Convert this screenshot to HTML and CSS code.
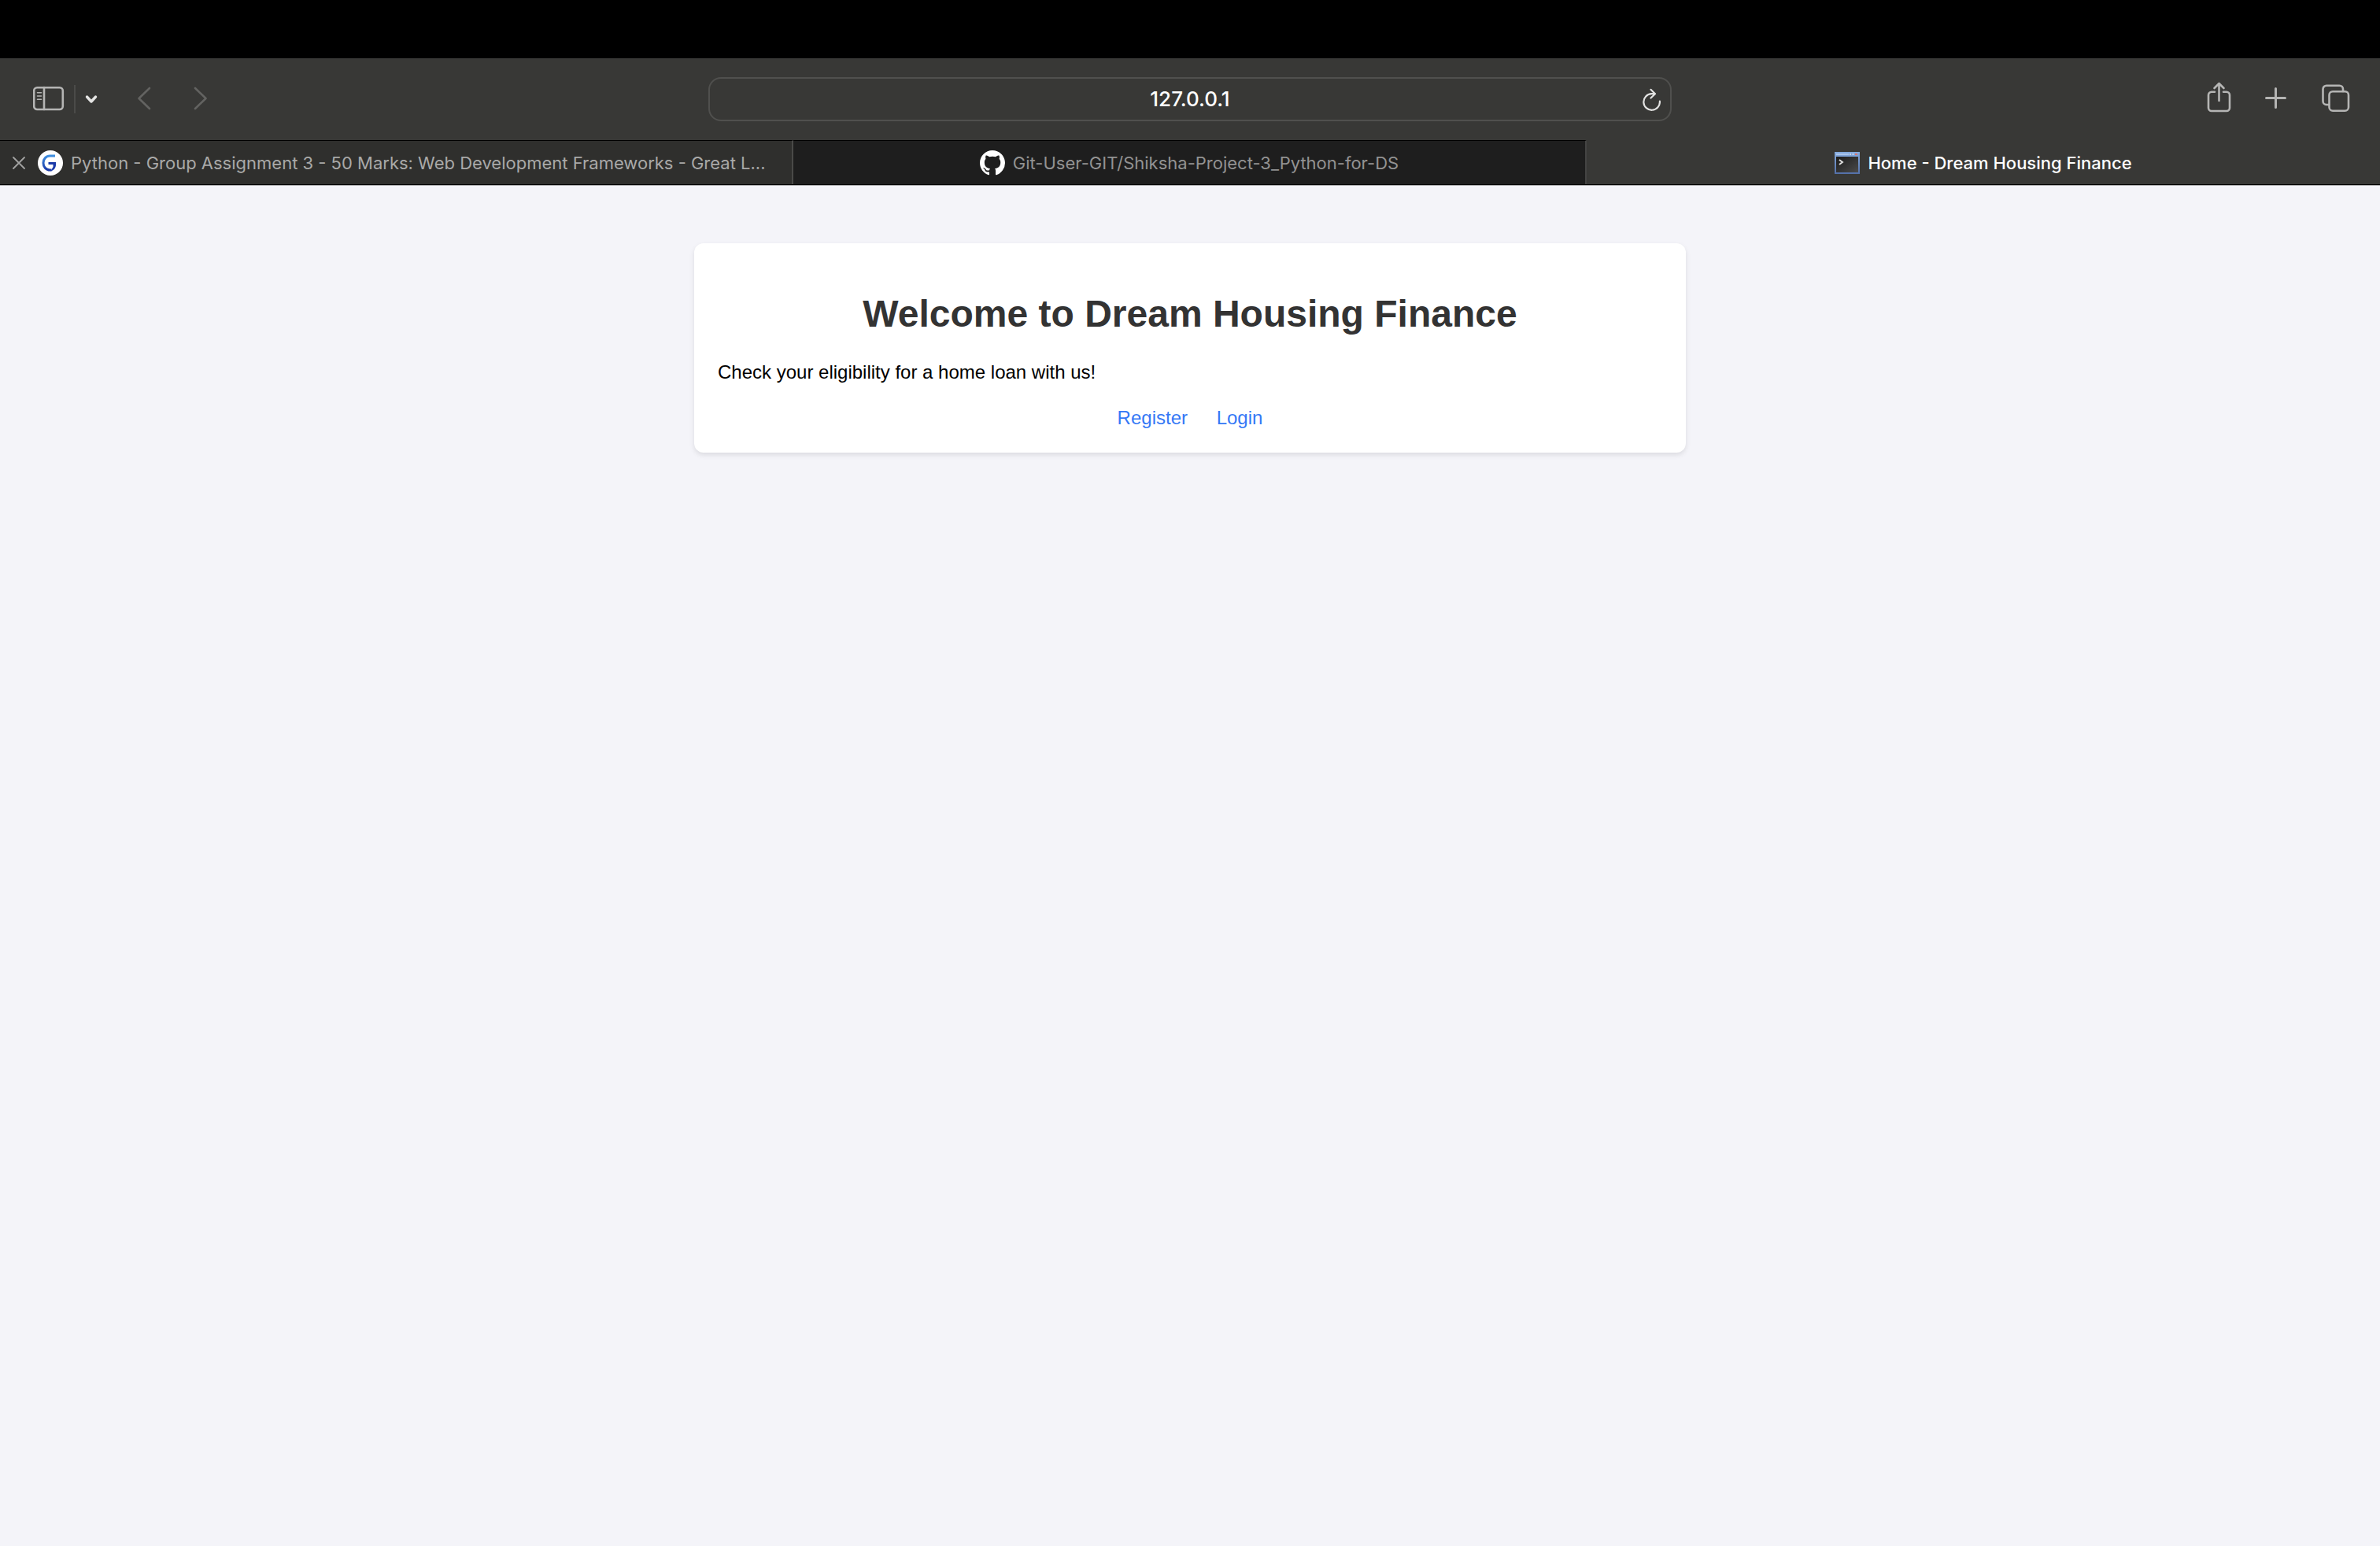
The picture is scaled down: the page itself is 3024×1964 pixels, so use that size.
FILE: index.html
```html
<!DOCTYPE html>
<html lang="en">
<head>
<meta charset="utf-8">
<title>Home - Dream Housing Finance</title>
<link rel="stylesheet" href="styles.css">
</head>
<body>
<header class="browser">
  <div class="toolbar">
    <div class="tools tools-start">
      <button class="tool" aria-label="Show sidebar">
        <svg width="40" height="48" viewBox="0 0 40 48"><rect x="1.2" y="9.2" width="36.6" height="27.8" rx="4"/><path d="M14 9v28"/><path class="fine" d="M5.5 15.7h5M5.5 20h5M5.5 24.3h5"/></svg>
      </button>
      <span class="divider"></span>
      <button class="tool tool-bright" aria-label="Tab groups">
        <svg width="16" height="48" viewBox="0 0 16 48"><path d="M2.5 21l5.5 6 5.5-6"/></svg>
      </button>
      <button class="tool tool-dim tool-back" aria-label="Back">
        <svg width="18" height="48" viewBox="0 0 18 48"><path d="M16 10L2.5 23 16 36"/></svg>
      </button>
      <button class="tool tool-dim tool-forward" aria-label="Forward">
        <svg width="18" height="48" viewBox="0 0 18 48"><path d="M2 10l13.5 13L2 36"/></svg>
      </button>
    </div>
    <div class="address">
      <input class="address-input" type="text" value="127.0.0.1" aria-label="Address">
      <button class="tool reload" aria-label="Reload">
        <svg width="24" height="32" viewBox="0 0 24 32"><path d="M17 9.2H12.5A10.3 10.3 0 1 0 22.9 18.5M11.5 3.8L17 9.2l-5.5 5.3"/></svg>
      </button>
    </div>
    <div class="tools tools-end">
      <button class="tool" aria-label="Share">
        <svg width="31" height="48" viewBox="0 0 31 48"><path d="M10 14.700H6a4 4 0 0 0-4 4V35a4 4 0 0 0 4 4h19a4 4 0 0 0 4-4V18.700a4 4 0 0 0-4-4H21M15.500 26V5M9.500 10l6-6 6 6"/></svg>
      </button>
      <button class="tool" aria-label="New tab">
        <svg width="30" height="48" viewBox="0 0 30 48"><path class="plus" d="M14.500 10.500v24M2.500 22.500h24"/></svg>
      </button>
      <button class="tool" aria-label="Tab overview">
        <svg width="37" height="48" viewBox="0 0 37 48"><path d="M10 31H7a4.500 4.500 0 0 1-4.500-4.500V11.200A4.500 4.500 0 0 1 7 6.700h16.500A4.500 4.500 0 0 1 28 11.200V14"/><rect x="10.500" y="14.200" width="24.500" height="24.500" rx="4.500"/></svg>
      </button>
    </div>
  </div>
  <nav class="tabs" aria-label="Tabs">
    <div class="tab tab-hover">
      <button class="tool close" aria-label="Close tab">
        <svg width="16" height="16" viewBox="0 0 16 16"><path d="M1 1l14 14M15 1L1 15"/></svg>
      </button>
      <a class="tab-link" href="#">
        <svg class="favicon" width="32" height="32" viewBox="0 0 32 32"><defs><linearGradient id="g" x1="0" y1="0" x2="0" y2="1"><stop offset="0" stop-color="#3f8fe0"/><stop offset="1" stop-color="#1b3aa8"/></linearGradient></defs><circle cx="16" cy="16" r="16" fill="#fff"/><path d="M22 7h-6.500c-5 0-8.500 4-8.500 9s3.500 9 8.500 9h2" fill="none" stroke="url(#g)" stroke-width="3"/><path d="M13.500 15H23v3.500c0 3.500-2.500 7-6.500 8l1.500-3 1.500-2.500v-3h-6z" fill="#1b3aa8"/></svg>
        <span class="tab-title">Python - Group Assignment 3 - 50 Marks: Web Development Frameworks - Great L...</span>
      </a>
    </div>
    <div class="tab tab-idle">
      <a class="tab-link" href="#">
        <svg class="favicon" width="32" height="32" viewBox="0 0 16 16"><path fill="#fff" d="M8 0C3.580 0 0 3.580 0 8c0 3.540 2.290 6.530 5.470 7.590.4.070.55-.17.55-.38 0-.19-.01-.82-.01-1.490-2.010.37-2.530-.49-2.690-.94-.09-.23-.48-.94-.82-1.130-.28-.15-.68-.52-.01-.53.63-.01 1.080.58 1.230.82.72 1.210 1.870.87 2.330.66.07-.52.28-.87.51-1.070-1.780-.2-3.640-.89-3.640-3.950 0-.87.31-1.590.82-2.150-.08-.2-.36-1.020.08-2.120 0 0 .67-.21 2.200.82.64-.18 1.320-.27 2-.27s1.360.09 2 .27c1.530-1.040 2.200-.82 2.200-.82.44 1.100.16 1.920.08 2.120.51.56.82 1.270.82 2.150 0 3.070-1.870 3.750-3.650 3.950.29.25.54.73.54 1.480 0 1.070-.01 1.930-.01 2.200 0 .21.15.46.55.38A8.010 8.010 0 0 0 16 8c0-4.420-3.580-8-8-8z"/></svg>
        <span class="tab-title">Git-User-GIT/Shiksha-Project-3_Python-for-DS</span>
      </a>
    </div>
    <div class="tab tab-current">
      <a class="tab-link" href="#" aria-current="page">
        <svg class="favicon" width="32" height="32" viewBox="0 0 32 32"><defs><linearGradient id="s" x1="0" y1="0" x2="1" y2="1"><stop offset="0" stop-color="#1c1c1c"/><stop offset="1" stop-color="#4a4a4a"/></linearGradient><linearGradient id="f" x1="0" y1="0" x2="0" y2="1"><stop offset="0" stop-color="#86acdf"/><stop offset="1" stop-color="#5470a8"/></linearGradient></defs><path d="M0 2h32v28H0z" fill="url(#f)"/><path d="M2 4h16v2H2z" fill="#a9c4ea"/><path d="M19 4h2v2h-2zM22.500 4h2v2h-2z" fill="#c8d4e8"/><path d="M26 4h3v2h-3z" fill="#d9776f"/><path d="M2 8h28v20H2z" fill="url(#s)"/><path d="M6 12l4 3-4 3" fill="none" stroke="#ddd" stroke-width="2"/></svg>
        <span class="tab-title">Home - Dream Housing Finance</span>
      </a>
    </div>
  </nav>
</header>
<main class="page">
  <section class="card">
    <h1 class="heading">Welcome to Dream Housing Finance</h1>
    <p class="lead">Check your eligibility for a home loan with us!</p>
    <div class="links">
      <a class="link" href="#">Register</a>
      <a class="link" href="#">Login</a>
    </div>
  </section>
</main>
</body>
</html>
```
FILE: styles.css
```css
* { box-sizing: border-box; }

body {
  margin: 0;
  min-height: 100vh;
  background: #f4f4f9;
  color: #000;
  font-family: "Liberation Sans", Arial, sans-serif;
  font-size: 24px;
}

.browser {
  border-top: 74px solid #000;
  border-bottom: 1px solid #a9a9ab;
  background: #383836;
  font-family: Inter, sans-serif;
}

.toolbar {
  display: grid;
  grid-template-columns: 1fr minmax(0, 1224px) 1fr;
  align-items: center;
  height: 104px;
}

.tools { display: flex; align-items: center; }
.tools-start { gap: 12px; padding-left: 42px; }
.tools-end { justify-content: flex-end; gap: 42px; padding-right: 38px; }

.tool {
  display: block;
  padding: 0;
  border: 0;
  background: none;
  color: #b5b5b4;
}
.tool svg {
  display: block;
  fill: none;
  stroke: currentColor;
  stroke-width: 2.6;
  stroke-linecap: round;
  stroke-linejoin: round;
}
.tool .fine { stroke-width: 1.6; }
.tool .plus { stroke-width: 3; }
.tool-bright { color: #e4e4e3; }
.tool-bright svg { stroke-width: 3.4; }
.tool-dim { color: #636361; }
.tool-back { margin-left: 38px; }
.tool-forward { margin-left: 42px; }

.divider { width: 2px; height: 36px; background: #4b4b49; }

.address {
  display: flex;
  align-items: center;
  height: 56px;
  padding: 0 12px;
  border: 2px solid #50504e;
  border-radius: 16px;
}
.address-input {
  flex: 1;
  min-width: 0;
  padding: 0 0 0 24px;
  border: 0;
  outline: 0;
  background: none;
  color: #fff;
  font: 500 26px/32px Inter, sans-serif;
  text-align: center;
}
.reload { color: #e2e2e1; }
.reload svg { stroke-width: 2.2; }

.tabs {
  display: grid;
  grid-template-columns: repeat(3, 1fr);
  height: 57px;
  border-bottom: 1px solid #000;
}
.tab {
  display: flex;
  align-items: center;
  min-width: 0;
  padding: 0 16px;
  border-top: 1px solid #000;
}
.tab-hover {
  border-right: 2px solid #4a4a48;
  background: #2f2f2d;
  color: #a9a9a8;
}
.tab-idle {
  border-right: 2px solid #444443;
  background: #1e1e1e;
  color: #929292;
}
.tab-current { border-top-color: transparent; color: #fff; font-weight: 500; }

.close { color: #a3a3a2; }
.close svg { stroke-width: 1.8; }

.tab-link {
  display: flex;
  flex: 1;
  align-items: center;
  justify-content: center;
  gap: 10px;
  min-width: 0;
  color: inherit;
  text-decoration: none;
}
.tab-hover .tab-link { justify-content: flex-start; margin-left: 16px; }
.favicon { flex: none; }
.tab-title {
  overflow: hidden;
  font-size: 22px;
  line-height: 32px;
  text-overflow: ellipsis;
  white-space: nowrap;
}

.page { padding: 73px 30px; }

.card {
  max-width: 1260px;
  margin: 0 auto;
  padding: 30px;
  border-radius: 12px;
  background: #fff;
  box-shadow: 0 3px 6px rgba(0, 0, 0, 0.1);
}
.heading {
  margin: 32px 0;
  color: #333;
  font-size: 48px;
  line-height: 56px;
  text-align: center;
}
.lead { margin: 0 0 30px; line-height: 28px; }
.links { line-height: 28px; text-align: center; }
.link { margin: 0 15px; color: #3478f6; text-decoration: none; }
```
